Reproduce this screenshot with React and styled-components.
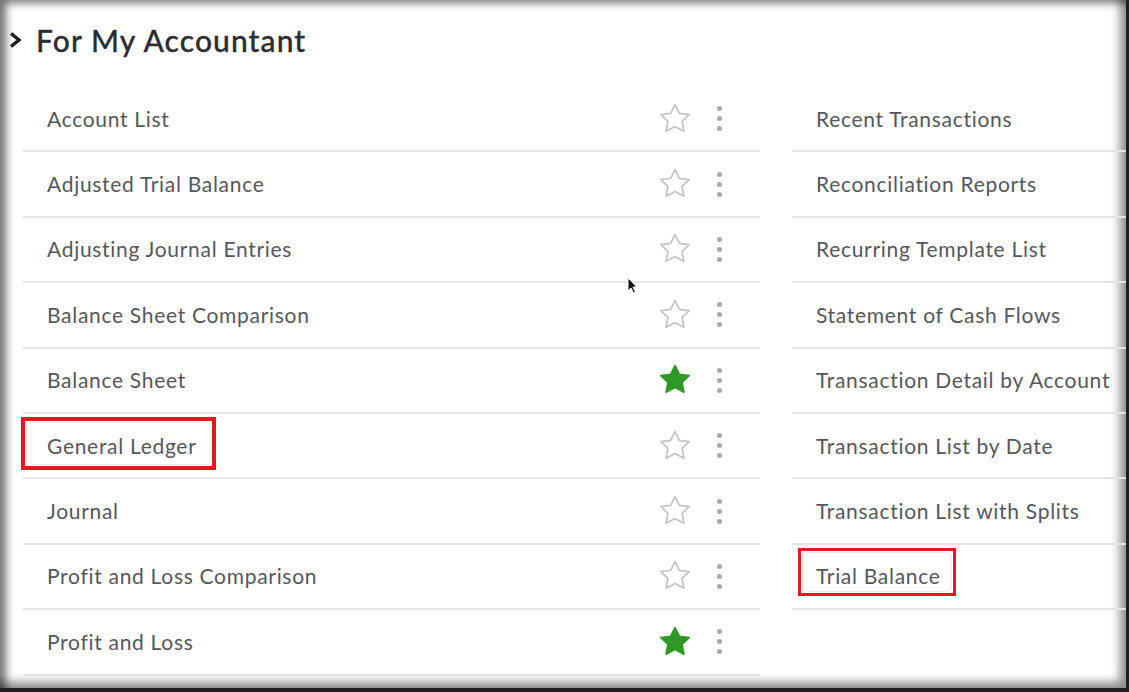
import React from "react"
import styled, { createGlobalStyle } from "styled-components"

const GlobalStyle = createGlobalStyle`
  html, body {
    margin: 0;
    padding: 0;
    background: #1c1c1c;
    overflow: hidden;
  }
  * { box-sizing: border-box; }
`

const Frame = styled.div`
  position: relative;
  width: 1129px;
  height: 692px;
  background: #fff;
  border-right: 3px solid #1e1e1e;
  border-bottom: 4px solid #1e1e1e;
  box-shadow:
    inset 8px 5px 8px -2px rgba(0, 0, 0, 0.55),
    inset -10px -10px 10px -4px rgba(0, 0, 0, 0.45);
  font-family: Lato, "Open Sans", sans-serif;
  overflow: hidden;
`

const Header = styled.div`
  display: flex;
  align-items: center;
  gap: 13px;
  padding: 18px 0 0 8px;
  height: 62px;
`

const Title = styled.h2`
  margin: 0;
  font-size: 30px;
  font-weight: 500;
  color: #2b2d31;
  letter-spacing: 1.1px;
  -webkit-text-stroke: 0.3px #2b2d31;
`

const Columns = styled.div`
  display: grid;
  grid-template-columns: 737px 1fr;
  column-gap: 32px;
  padding-left: 23px;
  margin-top: 25px;
`

const List = styled.div`
  display: flex;
  flex-direction: column;
`

const Row = styled.div`
  position: relative;
  display: flex;
  align-items: center;
  height: 65.4px;
  padding-left: 24px;
  padding-right: 36px;
  border-bottom: 2px solid #e3e4e6;
`

const Label = styled.span`
  position: relative;
  flex: 1;
  font-size: 21px;
  line-height: 26px;
  color: #55575c;
  letter-spacing: 0.7px;
  white-space: nowrap;
`

const Highlight = styled.span`
  position: absolute;
  left: ${p => p.$left}px;
  top: ${p => p.$top}px;
  width: ${p => p.$width}px;
  height: ${p => p.$height}px;
  border: ${p => p.$thick}px solid #e8161f;
  pointer-events: none;
  &::after {
    content: "";
    position: absolute;
    inset: 1px;
    border: 1px solid #ececec;
    border-radius: 6px;
  }
`

const Actions = styled.div`
  display: flex;
  align-items: center;
  gap: 22px;
`

const Kebab = styled.span`
  display: flex;
  flex-direction: column;
  gap: 5px;
  width: 10px;
  align-items: center;
  span {
    width: 5px;
    height: 5px;
    border-radius: 50%;
    background: #a8a9ac;
  }
`

const Cursor = styled.svg`
  position: absolute;
  left: 627px;
  top: 277px;
`

const Star = ({ filled }) => (
  <svg width="34" height="34" viewBox="0 0 24 24">
    <polygon
      points="12,1.8 15.1,8 22,8.9 17,13.7 18.3,20.6 12,17.3 5.7,20.6 7,13.7 2,8.9 8.9,8"
      fill={filled ? "#2e9a24" : "none"}
      stroke={filled ? "#2e9a24" : "#c2c3c6"}
      strokeWidth="1.2"
      strokeLinejoin="round"
    />
  </svg>
)

const leftItems = [
  { name: "Account List" },
  { name: "Adjusted Trial Balance" },
  { name: "Adjusting Journal Entries" },
  { name: "Balance Sheet Comparison" },
  { name: "Balance Sheet", fav: true },
  { name: "General Ledger", mark: { left: -26, top: -16, width: 195, height: 53, thick: 4 } },
  { name: "Journal" },
  { name: "Profit and Loss Comparison" },
  { name: "Profit and Loss", fav: true },
]

const rightItems = [
  { name: "Recent Transactions" },
  { name: "Reconciliation Reports" },
  { name: "Recurring Template List" },
  { name: "Statement of Cash Flows" },
  { name: "Transaction Detail by Account" },
  { name: "Transaction List by Date" },
  { name: "Transaction List with Splits" },
  { name: "Trial Balance", mark: { left: -18, top: -15, width: 158, height: 48, thick: 3 } },
]

const Item = ({ item, actions }) => (
  <Row>
    <Label>
      {item.name}
      {item.mark && (
        <Highlight
          $left={item.mark.left}
          $top={item.mark.top}
          $width={item.mark.width}
          $height={item.mark.height}
          $thick={item.mark.thick}
        />
      )}
    </Label>
    {actions && (
      <Actions>
        <Star filled={item.fav} />
        <Kebab><span /><span /><span /></Kebab>
      </Actions>
    )}
  </Row>
)

export default function App() {
  return (
    <>
      <GlobalStyle />
      <Frame>
        <Header>
          <svg width="15" height="18" viewBox="0 0 15 18">
            <path d="M3 2.5 L11 9 L3 15.5" fill="none" stroke="#1e1e1e" strokeWidth="3.4" />
          </svg>
          <Title>For My Accountant</Title>
        </Header>
        <Columns>
          <List>
            {leftItems.map((item, i) => (
              <Item item={item} actions key={`l-${i}`} />
            ))}
          </List>
          <List>
            {rightItems.map((item, i) => (
              <Item item={item} key={`r-${i}`} />
            ))}
          </List>
        </Columns>
        <Cursor width="12" height="18" viewBox="0 0 12 18">
          <path d="M1 1 L1 14 L4 11 L6.5 16 L8.5 15 L6 10 L10 10 Z" fill="#111" stroke="#fff" strokeWidth="1" />
        </Cursor>
      </Frame>
    </>
  )
}
